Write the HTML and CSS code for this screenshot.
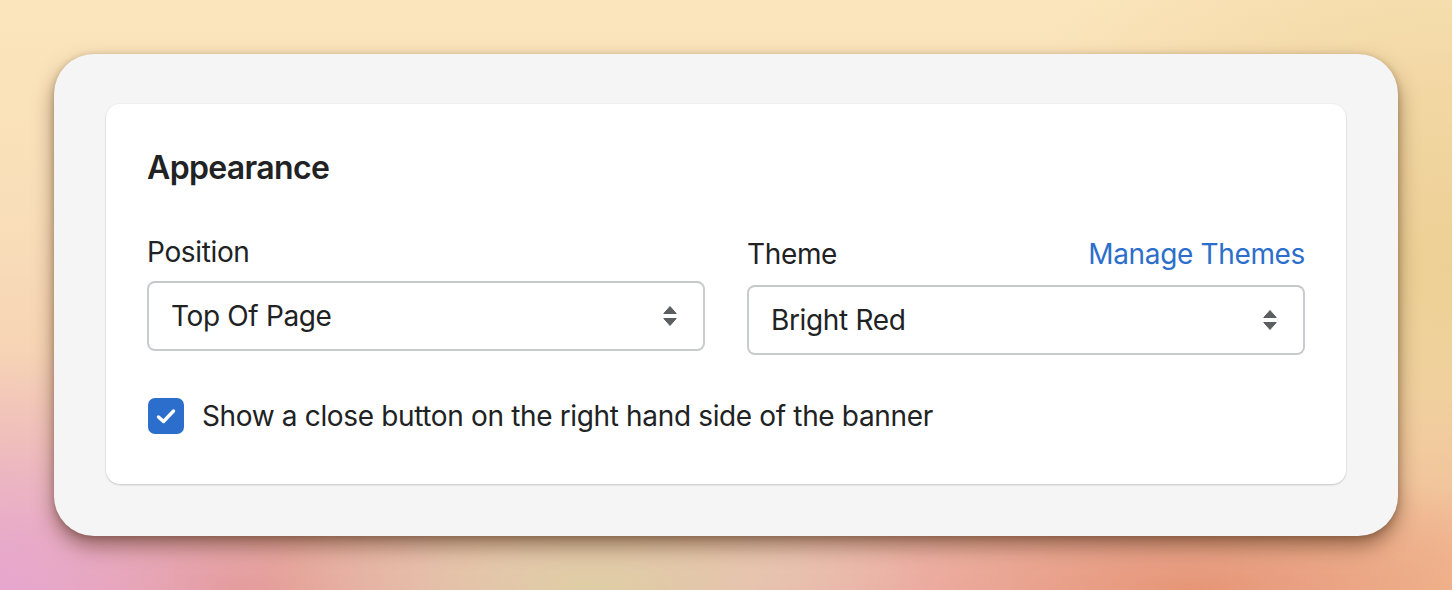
FILE: index.html
```html
<!DOCTYPE html>
<html lang="en">
<head>
<meta charset="utf-8">
<title>Appearance</title>
<link rel="stylesheet" href="styles.css">
</head>
<body>
<div class="panel">
  <div class="card">
    <h2 class="heading">Appearance</h2>
    <div class="fields">
      <div class="field">
        <div class="label-row"><span class="label">Position</span></div>
        <div class="select">
          <span class="select-text">Top Of Page</span>
          <svg class="arrows" width="14" height="20" viewBox="0 0 14 20"><path d="M7 0.5 L13.2 7.5 H0.8 Z" fill="#5c5f62" stroke="#5c5f62" stroke-width="1" stroke-linejoin="round"/><path d="M7 19.5 L13.2 12.5 H0.8 Z" fill="#5c5f62" stroke="#5c5f62" stroke-width="1" stroke-linejoin="round"/></svg>
        </div>
      </div>
      <div class="field">
        <div class="label-row label-row-tall"><span class="label">Theme</span><a class="link" href="#">Manage Themes</a></div>
        <div class="select">
          <span class="select-text">Bright Red</span>
          <svg class="arrows" width="14" height="20" viewBox="0 0 14 20"><path d="M7 0.5 L13.2 7.5 H0.8 Z" fill="#5c5f62" stroke="#5c5f62" stroke-width="1" stroke-linejoin="round"/><path d="M7 19.5 L13.2 12.5 H0.8 Z" fill="#5c5f62" stroke="#5c5f62" stroke-width="1" stroke-linejoin="round"/></svg>
        </div>
      </div>
    </div>
    <label class="check-row">
      <span class="checkbox"><svg width="36" height="36" viewBox="0 0 36 36"><polyline points="10.5,19 15.5,23.5 25.5,13" fill="none" stroke="#fff" stroke-width="3.4" stroke-linecap="round" stroke-linejoin="round"/></svg></span>
      <span class="check-label">Show a close button on the right hand side of the banner</span>
    </label>
  </div>
</div>
</body>
</html>
```
FILE: styles.css
```css
html, body {
  margin: 0;
  padding: 0;
}
body {
  width: 1452px;
  height: 590px;
  overflow: hidden;
  box-sizing: border-box;
  padding: 54px;
  font-family: Inter, "Noto Sans", sans-serif;
  color: #202223;
  background:
    radial-gradient(ellipse 300px 240px at 0% 100%, rgba(230,166,206,1), rgba(230,166,206,0) 100%),
    radial-gradient(ellipse 330px 140px at 41% 100%, rgba(222,206,164,1), rgba(222,206,164,0) 100%),
    radial-gradient(ellipse 280px 110px at 16% 100%, rgba(226,150,140,0.9), rgba(226,150,140,0) 100%),
    radial-gradient(ellipse 420px 130px at 82% 100%, rgba(230,150,118,1), rgba(230,150,118,0) 100%),
    radial-gradient(ellipse 300px 200px at 100% 100%, rgba(244,192,148,1), rgba(244,192,148,0) 100%),
    radial-gradient(ellipse 480px 420px at 100% 45%, rgba(237,208,148,1), rgba(237,208,148,0) 100%),
    linear-gradient(180deg, #fbe5bc 0%, #f9dfb9 35%, #f5cdb2 75%, #eeb7b8 100%);
}
.panel {
  width: 1344px;
  height: 482px;
  box-sizing: border-box;
  padding: 50px 52px;
  background: #f5f5f5;
  border-radius: 40px;
  box-shadow: 0 10px 20px rgba(70, 35, 10, 0.5), 0 2px 6px rgba(60, 30, 10, 0.25);
}
.card {
  background: #ffffff;
  border-radius: 14px;
  padding: 40px 40px 48px 41px;
  box-shadow: 0 1px 2px rgba(0,0,0,0.18), 0 0 0 1px rgba(63,63,68,0.02);
}
.heading {
  margin: 0;
  font-size: 32px;
  line-height: 48px;
  font-weight: 600;
  letter-spacing: -0.65px;
}
.fields {
  display: grid;
  grid-template-columns: 558px 558px;
  column-gap: 42px;
  margin-top: 40px;
  align-items: start;
}
.label-row {
  display: flex;
  align-items: center;
  justify-content: space-between;
  height: 40px;
  margin-bottom: 9px;
}
.label-row-tall {
  height: 44px;
}
.label, .link, .select-text, .check-label {
  font-size: 28px;
  line-height: 40px;
  letter-spacing: -0.35px;
}
.link {
  color: #2c6ecb;
  text-decoration: none;
}
.select {
  height: 70px;
  box-sizing: border-box;
  border: 2px solid #c9cccf;
  border-top-color: #c4c8cc;
  border-radius: 8px;
  display: flex;
  align-items: center;
  justify-content: space-between;
  padding: 0 26px 0 22px;
}
.arrows {
  display: block;
}
.check-row {
  display: flex;
  align-items: center;
  height: 40px;
  margin-top: 41px;
  margin-left: 1px;
}
.checkbox {
  width: 36px;
  height: 36px;
  border-radius: 7px;
  background: #2c6ecb;
  display: block;
  flex: none;
}
.checkbox svg {
  display: block;
}
.check-label {
  margin-left: 18px;
}
```
